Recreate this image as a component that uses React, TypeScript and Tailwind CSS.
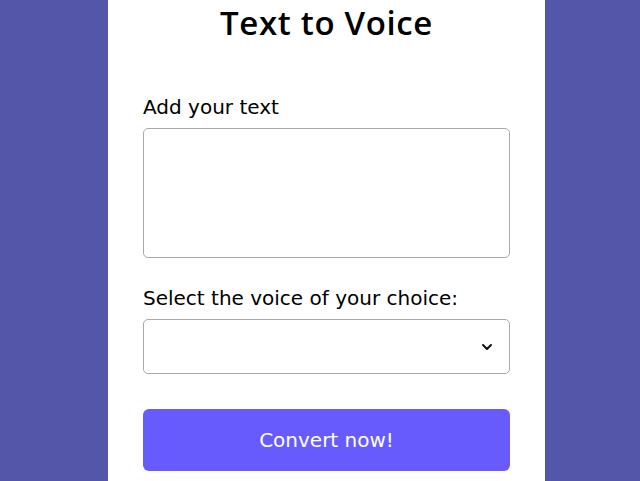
export default function App() {
  return (
    <div
      className="flex h-[481px] w-[640px] overflow-hidden bg-[#5356a9]"
      style={{fontFamily: '"DejaVu Sans", "Noto Sans", sans-serif'}}
    >
      <div className="ml-[108px] flex h-full w-[437px] flex-col bg-white px-[35px]">
        <h1 className="mt-[3px] text-center font-['Open_Sans',sans-serif] text-[33px] font-semibold leading-[40px] tracking-[0.02em] text-black">
          Text to Voice
        </h1>
        <label className="mt-[50px] text-[20px] leading-[28px] text-black">Add your text</label>
        <textarea className="mt-[7px] h-[130px] w-full resize-none rounded-[5px] border border-[#a9a9a9] bg-white" />
        <label className="mt-[26px] text-[20px] leading-[28px] text-black">
          Select the voice of your choice:
        </label>
        <div className="mt-[7px] flex h-[55px] w-full items-center justify-end rounded-[5px] border border-[#a9a9a9] bg-white pr-[16px]">
          <svg width="12" height="8" viewBox="0 0 12 8" fill="none">
            <path d="M2 2l4 4 4-4" stroke="#111" strokeWidth="2" strokeLinecap="round" strokeLinejoin="round" />
          </svg>
        </div>
        <button className="mt-[35px] flex h-[62px] w-full items-center justify-center rounded-[6px] bg-[#685bfe] text-[20px] text-white">
          Convert now!
        </button>
      </div>
    </div>
  )
}
